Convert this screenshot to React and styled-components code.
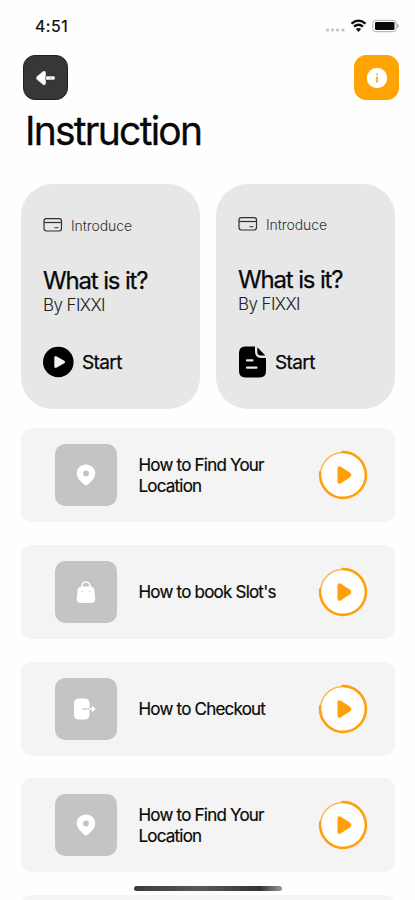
import React from "react";
import styled, { createGlobalStyle } from "styled-components";

const GlobalStyle = createGlobalStyle`
  * { box-sizing: border-box; }
  body { margin: 0; background: #fefefe; }
  h1, h2, p { margin: 0; font-weight: 400; }
  button { border: 0; padding: 0; background: none; font: inherit; color: inherit; }
  svg { display: block; flex: none; }
`;

const Screen = styled.main`
  position: relative;
  width: 415px;
  height: 900px;
  overflow: hidden;
  background: #fefefe;
  color: #080808;
  font-family: Inter, "Liberation Sans", sans-serif;
  white-space: nowrap;
`;

const StatusBar = styled.header`
  display: flex;
  justify-content: space-between;
  align-items: center;
  height: 55px;
  padding: 0 15px 3px 35px;
`;

const Clock = styled.span`
  font-size: 16px;
  font-weight: 400;
  line-height: 20px;
  letter-spacing: 0.5px;
  -webkit-text-stroke: 0.2px currentColor;
`;

const NavBar = styled.nav`
  display: flex;
  justify-content: space-between;
  padding: 0 16px 0 23px;
`;

const NavButton = styled.button`
  display: grid;
  place-items: center;
  width: 45px;
  height: 45px;
  border-radius: 12px;
  background: ${(p) => (p.$accent ? "#ffa404" : "#373737")};
  border: 1px solid ${(p) => (p.$accent ? "#ffa404" : "#202020")};
`;

const Title = styled.h1`
  margin: 7px 0 0 25px;
  font-size: 39px;
  line-height: 48px;
  letter-spacing: -1.75px;
  -webkit-text-stroke: 0.3px currentColor;
`;

const Cards = styled.section`
  display: grid;
  grid-template-columns: 179px 179px;
  column-gap: 16px;
  margin: 29px 0 0 21px;
`;

const Card = styled.article`
  height: 225px;
  padding: ${(p) => (p.$raised ? 30 : 31)}px 22px 0;
  border-radius: 32px;
  background: #e7e7e7;
`;

const Tag = styled.div`
  display: flex;
  align-items: center;
  gap: 8px;
  height: 20px;
  font-size: 14px;
  font-weight: 300;
  letter-spacing: -0.1px;
  color: #333;
`;

const CardTitle = styled.h2`
  margin-top: 32px;
  font-size: 24px;
  line-height: 28px;
  letter-spacing: -1.15px;
  -webkit-text-stroke: 0.25px currentColor;
`;

const Author = styled.p`
  margin-top: -1px;
  font-size: 17px;
  font-weight: 300;
  line-height: 22px;
  letter-spacing: -0.6px;
  color: #222;
`;

const StartButton = styled.button`
  display: flex;
  align-items: center;
  gap: 8px;
  height: 32px;
  margin-top: ${(p) => (p.$raised ? 31 : 30)}px;
  font-size: 19px;
  letter-spacing: -0.6px;
  -webkit-text-stroke: 0.25px currentColor;

  span {
    padding-top: 1px;
  }
`;

const List = styled.section`
  display: flex;
  flex-direction: column;
  gap: 22.6px;
  margin: 19.4px 20px 0 21px;
`;

const Row = styled.article`
  display: grid;
  grid-template-columns: 62px 1fr 50px;
  column-gap: 22px;
  align-items: center;
  height: 94px;
  flex: none;
  padding: 0 27px 0 33.5px;
  border-radius: 11px;
  background: #f4f4f4;
`;

const Tile = styled.div`
  display: grid;
  place-items: center;
  width: 62px;
  height: 62px;
  border-radius: 10px;
  background: #c4c4c4;
`;

const RowText = styled.p`
  padding-top: 2px;
  font-size: 17px;
  line-height: 21px;
  letter-spacing: -0.79px;
  white-space: pre-line;
  -webkit-text-stroke: 0.2px currentColor;
`;

const HomeBar = styled.div`
  position: absolute;
  left: 134px;
  top: 886px;
  width: 148px;
  height: 5px;
  border-radius: 3px;
  background: linear-gradient(90deg, #3c3c3c, #5a5a5a 45%, #333 85%, #999);
`;

const StatusIcons = () => (
  <svg width="76" height="18" viewBox="324 17 76 18">
    <g fill="#c4c4c4">
      <rect x="326" y="28.500" width="3" height="3" rx="1" />
      <rect x="331" y="28.500" width="3" height="3" rx="1" />
      <rect x="336" y="28.500" width="3" height="3" rx="1" />
      <rect x="341.500" y="28.500" width="3" height="3" rx="1" />
    </g>
    <g fill="none" stroke="#0c0c0c" strokeWidth="2.300">
      <path d="M351.500 23.700Q358.500 17.600 365.500 23.700" />
      <path d="M354 26.700Q358.500 22.800 363 26.700" />
    </g>
    <path d="M355.900 29Q358.500 27 361.100 29L358.500 32Z" fill="#0c0c0c" />
    <rect x="372.800" y="20.300" width="23.400" height="11.400" rx="3" fill="#fff" stroke="#aaa" />
    <rect x="375" y="22" width="19.500" height="8" rx="1.300" fill="#080808" />
    <path d="M397.500 23.500Q400 26 397.500 28.500Z" fill="#888" />
  </svg>
);

const BackIcon = () => (
  <svg width="22" height="18" viewBox="0 0 22 18">
    <path
      d="M1.200 9Q1.200 8 2.200 7.200L7.800 2.500Q10.600 1 10.800 4V6.500V14Q10.600 17 7.800 15.500L2.200 10.800Q1.200 10 1.200 9Z"
      fill="#fff"
    />
    <path d="M10.800 7H18.500Q20.200 7 20.200 9T18.500 11H10.800Z" fill="#fff" stroke="#202020" strokeWidth=".5" />
    <path d="M14.500 9H17" stroke="#aaa" strokeWidth=".8" />
  </svg>
);

const InfoIcon = () => (
  <svg width="22" height="22" viewBox="0 0 22 22">
    <circle cx="11" cy="11" r="10.200" fill="#fff" />
    <path d="M11 10V15" stroke="#e89a1d" strokeWidth="1.500" strokeLinecap="round" />
    <circle cx="11" cy="7.300" r="1" fill="#efb865" />
  </svg>
);

const WalletIcon = () => (
  <svg width="20" height="16" viewBox="0 0 20 16" fill="none" stroke="#303030" strokeWidth="1.200">
    <rect x="1" y="1.700" width="17.500" height="12.300" rx="2.400" />
    <path d="M1 5.500H18.500" />
    <path d="M11.500 10.700H15.500" strokeWidth="1" />
  </svg>
);

const PlayDisc = () => (
  <svg width="31" height="32" viewBox="0 0 31 32">
    <circle cx="15.300" cy="16" r="15.300" fill="#000" />
    <path
      d="M11.300 12Q11.300 9.200 13.800 10.400L20.800 14.400Q23.300 16 20.800 17.600L13.800 21.600Q11.300 22.800 11.300 20Z"
      fill="#f2f2f2"
    />
  </svg>
);

const DocumentIcon = () => (
  <svg width="29" height="32" viewBox="0 0 29 32">
    <path
      d="M7 .500H17V5.500Q17 12 23 12H28V25Q28 31.500 21.500 31.500H7.500Q1 31.500 1 25V7Q1 .500 7 .500Z"
      fill="#000"
    />
    <path d="M19.300 1.200L27.300 9.400H22.500Q19.300 9.400 19.300 6Z" fill="#000" />
    <path d="M9 14.300H14.500M9 21.700H18.500" stroke="#e7e7e7" strokeWidth="2.300" strokeLinecap="round" />
  </svg>
);

const PinIcon = () => (
  <svg width="22" height="24" viewBox="0 0 22 24">
    <path
      d="M11 1.500C16 1.500 20.200 5.200 20.200 10.300C20.200 15 16.500 18.500 13 21.500Q11 23.200 9 21.500C5.500 18.500 1.800 15 1.800 10.300C1.800 5.200 6 1.500 11 1.500Z"
      fill="#fff"
    />
    <circle cx="11" cy="10.500" r="2.900" fill="#c4c4c4" />
  </svg>
);

const BagIcon = () => (
  <svg width="22" height="24" viewBox="0 0 22 24">
    <path d="M6.300 8.500C7.300 -.200 14.700 -.200 15.700 8.500" fill="none" stroke="#fff" strokeWidth="1.600" />
    <path
      d="M6.500 6.500H15.500Q18.500 6.500 19.200 9.500L20.300 18Q20.800 23 16 23H6Q1.200 23 1.700 18L2.800 9.500Q3.500 6.500 6.500 6.500Z"
      fill="#fff"
    />
    <circle cx="7.300" cy="11.500" r=".8" fill="#d0d0d0" />
    <circle cx="14.700" cy="11.500" r=".8" fill="#d0d0d0" />
  </svg>
);

const ExitIcon = () => (
  <svg width="23" height="24" viewBox="0 0 23 24">
    <rect x="0" y="1.500" width="15.500" height="21" rx="4.500" fill="#fff" />
    <path d="M8 12H15.500" stroke="#c4c4c4" strokeWidth="1.200" />
    <path d="M15.500 12H21" stroke="#fff" strokeWidth="1.500" />
    <path d="M18 8.500L21.700 12L18 15.500Z" fill="#fff" />
  </svg>
);

const PlayRing = () => (
  <svg width="50" height="50" viewBox="0 0 50 50">
    <circle cx="25" cy="25" r="23" fill="#fff" />
    <path d="M2.500 25A22.500 22.500 0 0 1 25 2.500" fill="none" stroke="#f9b54b" strokeWidth="1.500" />
    <path
      d="M23.500 .800A24.200 24.200 0 1 1 .800 25Q.800 23 1.300 21L3.300 21.500Q2.800 24 3.500 27A21.600 21.600 0 1 0 26 3.400L23.500 2.500Z"
      fill="#ff9f0a"
    />
    <path
      d="M19.500 18.500Q19.500 15 23 16.800L31.700 22.400Q35 25 31.700 27.600L23 33.200Q19.500 35 19.500 31.500Z"
      fill="#ff9f0a"
    />
  </svg>
);

const cards = [
  { Icon: PlayDisc, raised: false },
  { Icon: DocumentIcon, raised: true },
];

const rows = [
  { Icon: PinIcon, text: "How to Find Your\nLocation" },
  { Icon: BagIcon, text: "How to book Slot's" },
  { Icon: ExitIcon, text: "How to Checkout" },
  { Icon: PinIcon, text: "How to Find Your\nLocation" },
];

export default function App() {
  return (
    <>
      <GlobalStyle />
      <Screen>
        <StatusBar>
          <Clock>4:51</Clock>
          <StatusIcons />
        </StatusBar>
        <NavBar>
          <NavButton aria-label="Back"><BackIcon /></NavButton>
          <NavButton $accent aria-label="Information"><InfoIcon /></NavButton>
        </NavBar>
        <Title>Instruction</Title>
        <Cards>
          {cards.map(({ Icon, raised }, i) => (
            <Card key={i} $raised={raised}>
              <Tag><WalletIcon />Introduce</Tag>
              <CardTitle>What is it?</CardTitle>
              <Author>By FIXXI</Author>
              <StartButton $raised={raised}><Icon /><span>Start</span></StartButton>
            </Card>
          ))}
        </Cards>
        <List>
          {rows.map(({ Icon, text }, i) => (
            <Row key={i}>
              <Tile><Icon /></Tile>
              <RowText>{text}</RowText>
              <PlayRing />
            </Row>
          ))}
          <Row />
        </List>
        <HomeBar />
      </Screen>
    </>
  );
}
